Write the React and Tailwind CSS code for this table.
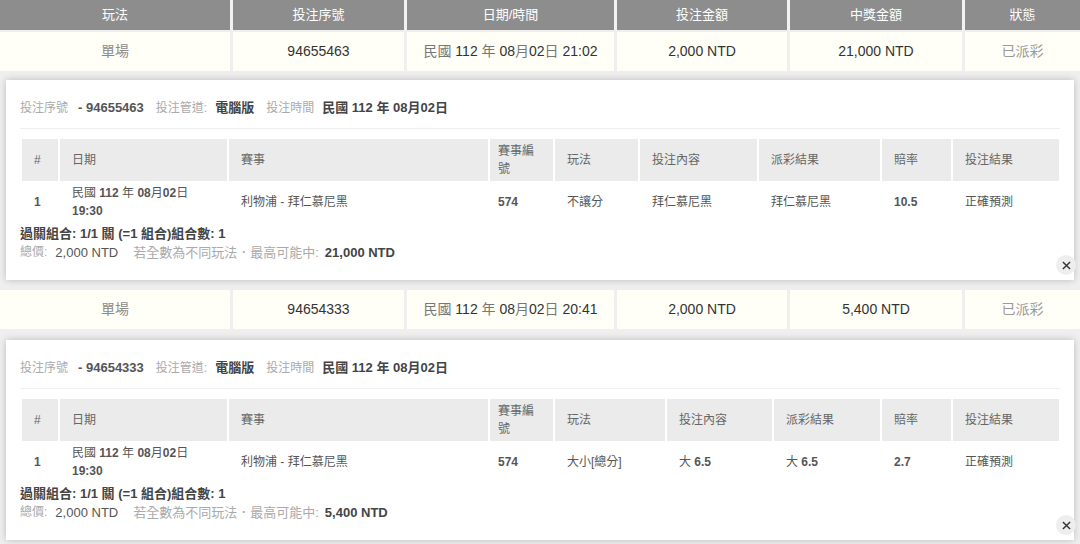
import React from 'react';

// split text into ascii / non-ascii runs so digits can be styled apart from CJK
function Mix({ text, ascii, cjk }) {
    return text.split(/([\x00-\x7F]+)/).map((s, i) =>
        s ? (
            <span key={i} className={/^[\x00-\x7F]+$/.test(s) ? ascii : cjk}>
                {s}
            </span>
        ) : null
    );
}

const bets = [
    {
        id: '94655463',
        time: '21:02',
        amount: '2,000 NTD',
        win: '21,000 NTD',
        play: '不讓分',
        content: '拜仁慕尼黑',
        result: '拜仁慕尼黑',
        odds: '10.5',
        cols: 'grid-cols-[36px_167px_259px_63px_83px_117px_121px_69px_106px]',
    },
    {
        id: '94654333',
        time: '20:41',
        amount: '2,000 NTD',
        win: '5,400 NTD',
        play: '大小[總分]',
        content: '大 6.5',
        result: '大 6.5',
        odds: '2.7',
        cols: 'grid-cols-[36px_167px_259px_63px_110px_105px_106px_69px_106px]',
    },
];

const topCols = 'grid grid-cols-[230px_171px_207px_170px_172px_115px] gap-x-[3px]';

function SummaryRow({ bet }) {
    return (
        <div className={`${topCols} h-[39px] text-[14px] text-[#333] bg-[#efefef]`}>
            <div className="bg-[#fffff7] flex items-center justify-center text-[#8a8a8a]">單場</div>
            <div className="bg-[#fffff7] flex items-center justify-center">{bet.id}</div>
            <div className="bg-[#fffff7] flex items-center justify-center whitespace-pre">
                <Mix text={`民國 112 年 08月02日 ${bet.time}`} ascii="text-[#333]" cjk="text-[#777]" />
            </div>
            <div className="bg-[#fffff7] flex items-center justify-center">{bet.amount}</div>
            <div className="bg-[#fffff7] flex items-center justify-center">{bet.win}</div>
            <div className="bg-[#fffff7] flex items-center justify-center text-[#999]">已派彩</div>
        </div>
    );
}

function DetailPanel({ bet }) {
    const headers = ['#', '日期', '賽事', '賽事編號', '玩法', '投注內容', '派彩結果', '賠率', '投注結果'];
    return (
        <div className="relative mx-[6px] h-[200px] bg-white shadow-[0_0_7px_rgba(0,0,0,0.22)] px-[14px] pt-[19px] text-[12px]">
            <div className="leading-[18px] whitespace-pre text-[#aaa] text-[13px] flex items-center">
                <span className="text-[12px]">投注序號</span>
                <span className="ml-[10px] font-bold text-[#555]">- {bet.id}</span>
                <span className="ml-[12px] text-[12px]">投注管道:</span>
                <span className="ml-[8px] font-bold text-[#444]">電腦版</span>
                <span className="ml-[12px] text-[12px]">投注時間</span>
                <span className="ml-[8px] font-bold text-[#444]">民國 112 年 08月02日</span>
            </div>
            <div className="mt-[11px] h-px bg-[#eeeeee]" />

            <div className={`mt-[10px] ml-[2px] grid ${bet.cols} gap-x-[2px] text-[#666]`}>
                {headers.map((h) => (
                    <div
                        key={h}
                        className={`h-[42px] bg-[#ebebeb] flex items-center leading-[18px] ${h === '賽事編號' ? 'px-[8px]' : 'px-[12px]'}`}
                    >
                        {h}
                    </div>
                ))}
            </div>
            <div className={`mt-[2px] ml-[2px] grid ${bet.cols} gap-x-[2px] text-[#555] leading-[18px]`}>
                <div className="px-[12px] h-[38px] flex items-center font-bold">1</div>
                <div className="px-[12px] h-[38px] flex flex-col justify-center">
                    <div><Mix text="民國 112 年 08月02日" ascii="font-bold" cjk="" /></div>
                    <div className="font-bold">19:30</div>
                </div>
                <div className="px-[12px] h-[38px] flex items-center">利物浦 - 拜仁慕尼黑</div>
                <div className="px-[8px] h-[38px] flex items-center font-bold">574</div>
                <div className="px-[12px] h-[38px] flex items-center">{bet.play}</div>
                <div className="px-[12px] h-[38px] flex items-center whitespace-pre"><Mix text={bet.content} ascii="font-bold" cjk="" /></div>
                <div className="px-[12px] h-[38px] flex items-center whitespace-pre"><Mix text={bet.result} ascii="font-bold" cjk="" /></div>
                <div className="px-[12px] h-[38px] flex items-center font-bold">{bet.odds}</div>
                <div className="px-[12px] h-[38px] flex items-center">正確預測</div>
            </div>

            <div className="mt-[3px] leading-[19px] font-bold text-[#444] text-[13px]">過關組合: 1/1 關 (=1 組合)組合數: 1</div>
            <div className="leading-[19px] whitespace-pre text-[#aaa] text-[13px] flex items-center">
                <span className="text-[12px]">總價:</span>
                <span className="ml-[8px] text-[#555]">{bet.amount}</span>
                <span className="ml-[15px]">若全數為不同玩法．最高可能中:</span>
                <span className="ml-[6px] font-bold text-[#444]">{bet.win}</span>
            </div>

            <button className="absolute right-[-2px] bottom-[5px] w-[20px] h-[20px] rounded-full bg-[#eeeeee] flex items-center justify-center text-[#333]">
                <svg width="9" height="9" viewBox="0 0 10 10">
                    <path d="M1 1L9 9M9 1L1 9" stroke="currentColor" strokeWidth="1.6" />
                </svg>
            </button>
        </div>
    );
}

export default function App() {
    return (
        <div className="w-[1080px] h-[544px] overflow-hidden bg-[#efefef] font-['Liberation_Sans','Noto_Sans_CJK_TC',sans-serif]">
            {/* column titles */}
            <div className={`${topCols} h-[30px] text-[13px] text-white bg-[#f2f2f2]`}>
                {['玩法', '投注序號', '日期/時間', '投注金額', '中獎金額', '狀態'].map((t) => (
                    <div key={t} className="bg-[#8d8d8d] flex items-center justify-center">
                        {t}
                    </div>
                ))}
            </div>
            <div className="mt-[2px]">
                <SummaryRow bet={bets[0]} />
            </div>
            <div className="mt-[9px]">
                <DetailPanel bet={bets[0]} />
            </div>
            <div className="mt-[10px]">
                <SummaryRow bet={bets[1]} />
            </div>
            <div className="mt-[11px]">
                <DetailPanel bet={bets[1]} />
            </div>
        </div>
    );
}
